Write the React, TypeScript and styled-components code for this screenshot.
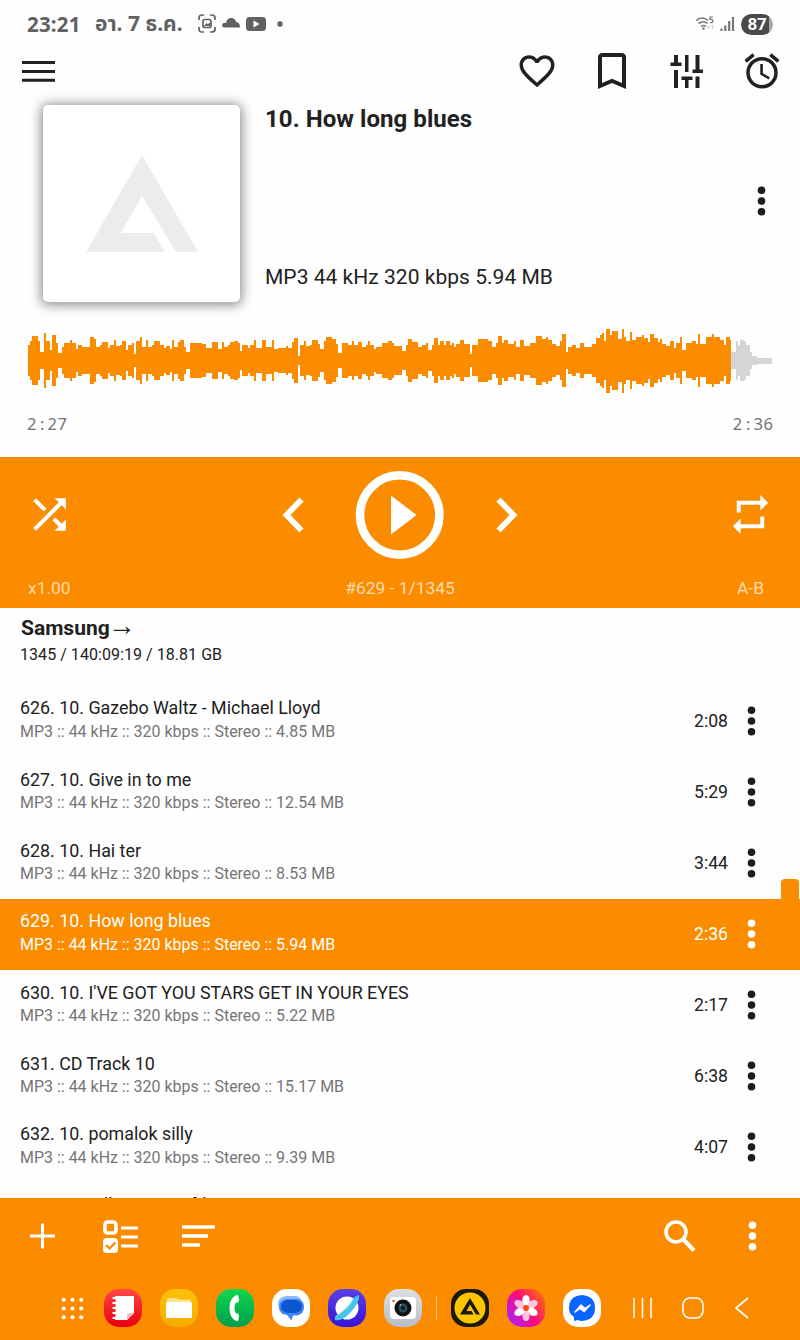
import React from "react";
import styled, { createGlobalStyle } from "styled-components";
import {
  MdAccessAlarm,
  MdBookmarkBorder,
  MdFavoriteBorder,
  MdRepeat,
  MdShuffle
} from "react-icons/md";

const ORANGE = "#fb8c00";
const INK = "#212121";

const GlobalStyle = createGlobalStyle`
  * {
    box-sizing: border-box;
  }

  body {
    margin: 0;
    background: #fefefe;
    color: ${INK};
    font-family: Roboto, "Noto Sans", sans-serif;
  }

  svg {
    display: block;
    flex: none;
  }
`;

const Screen = styled.div`
  display: flex;
  flex-direction: column;
  width: 800px;
  height: 1340px;
  overflow: hidden;
`;

const StatusBar = styled.div`
  display: flex;
  align-items: center;
  height: 48px;
  padding: 0 27px;
  color: #616161;
  font-family: "Noto Sans", "Noto Sans Thai", sans-serif;
  font-size: 20px;
  font-weight: 700;
`;

const Clock = styled.span`
  width: 68px;
  font-size: 20.5px;
  letter-spacing: 0.2px;
  white-space: nowrap;
`;

const DateText = styled.span`
  width: 103px;
  padding-top: 1px;
  font-size: 21px;
  white-space: nowrap;
`;

const Spacer = styled.div`
  flex: 1;
`;

const Battery = styled.div`
  display: flex;
  align-items: center;
  justify-content: center;
  width: 32px;
  height: 21px;
  margin-left: 6px;
  border-radius: 11px;
  background: linear-gradient(90deg, #4a4a4a 87%, #a8a8a8 87%);
  color: #fff;
  font-family: Roboto, sans-serif;
  font-size: 17px;
  letter-spacing: -0.3px;
`;

const Toolbar = styled.div`
  display: flex;
  align-items: center;
  height: 48px;
  padding: 0 1px 2px 22px;
`;

const ToolIcon = styled.div`
  display: flex;
  justify-content: center;
  width: 74.8px;
`;

const Header = styled.div`
  display: flex;
  height: 226px;
  padding: 9px 34px 0 43px;
`;

const Cover = styled.div`
  width: 197px;
  height: 197px;
  border-radius: 5px;
  background: #fff;
  box-shadow: 0 1px 12px 2px rgba(0, 0, 0, 0.45);
`;

const TrackInfo = styled.div`
  display: flex;
  flex: 1;
  flex-direction: column;
  justify-content: space-between;
  height: 185px;
  padding-left: 25px;
`;

const TrackTitle = styled.div`
  font-size: 24px;
  font-weight: 700;
  line-height: 28px;
  letter-spacing: 0.06px;
`;

const TrackFormat = styled.div`
  font-size: 21px;
  line-height: 26px;
  letter-spacing: 0.03px;
`;

const HeaderMenu = styled.div`
  padding-top: 81px;
`;

const WavePanel = styled.div`
  height: 135px;
  padding: 7px 28px 0;
`;

const TimeRow = styled.div`
  display: flex;
  justify-content: space-between;
  margin: 19px -1.5px 0 -1px;
  color: #757575;
  font-family: "Noto Sans", sans-serif;
  font-size: 16.5px;
  line-height: 24px;
  letter-spacing: 0.6px;
`;

const Colon = styled.span`
  padding: 0 2.5px 0 3px;
`;

const Controls = styled.div`
  height: 151px;
  padding: 14px 25px 0;
  background: ${ORANGE};
  color: #fff;
`;

const ControlButtons = styled.div`
  display: grid;
  grid-template-columns: 49px 1fr 49px;
  grid-template-rows: 87px;
  align-items: center;
  justify-items: center;
  height: 87px;
`;

const Transport = styled.div`
  display: flex;
  align-items: center;
  justify-content: center;
  gap: 51px;
`;

const ControlLabels = styled.div`
  display: grid;
  grid-template-columns: 100px 1fr 100px;
  padding: 19px 11px 0 3px;
  color: #ffdcae;
  font-size: 17.4px;
  line-height: 22px;

  span:nth-child(2) {
    padding-left: 8px;
    text-align: center;
  }

  span:last-child {
    text-align: right;
  }
`;

const ListHeader = styled.div`
  height: 78px;
  padding: 8px 20px 0;
`;

const ListName = styled.div`
  height: 24px;
  padding-left: 1px;
  font-size: 21px;
  font-weight: 700;
  line-height: 24px;
`;

const Arrow = styled.span`
  margin-left: -2px;
  font-family: "Liberation Sans", sans-serif;
  font-size: 28px;
  font-weight: 400;
  line-height: 0;
`;

const ListSummary = styled.div`
  padding-top: 4px;
  font-size: 16px;
  line-height: 21px;
  letter-spacing: 0.05px;
`;

const Playlist = styled.div`
  height: 512px;
  overflow: hidden;
`;

const RowText = styled.div`
  flex: 1;
  white-space: nowrap;
`;

const RowTitle = styled.div`
  height: 23px;
  font-size: 17.85px;
  line-height: 24px;
`;

const RowMeta = styled.div<{ $active?: boolean }>`
  color: ${p => (p.$active ? "#fff" : "#757575")};
  font-size: 15.97px;
  line-height: 23px;
`;

const Row = styled.div<{ $active?: boolean }>`
  position: relative;
  display: flex;
  align-items: flex-start;
  height: 71px;
  padding: 11px 44px 0 20px;
  background: ${p => (p.$active ? ORANGE : "transparent")};
  color: ${p => (p.$active ? "#fff" : INK)};

  &:nth-child(3n + 1) ${RowTitle},
  &:last-child ${RowTitle} {
    line-height: 22px;
  }
`;

const Duration = styled.div`
  margin-right: 19px;
  font-size: 17.6px;
  line-height: 49px;
`;

const RowMenu = styled.div`
  padding-top: 9px;
`;

const ScrollThumb = styled.div`
  position: absolute;
  top: -20px;
  right: 1px;
  width: 18px;
  height: 40px;
  border-radius: 4px;
  background: ${ORANGE};
`;

const BottomBar = styled.div`
  display: flex;
  align-items: center;
  height: 78px;
  padding: 0 43px 2px 30px;
  background: ${ORANGE};
`;

const BarActions = styled.div<{ $gap: number }>`
  display: flex;
  align-items: center;
  gap: ${p => p.$gap}px;
`;

const ListActions = styled(BarActions)`
  margin-left: 47px;
`;

const Dock = styled.div`
  display: flex;
  align-items: center;
  height: 64px;
  padding: 0 0 0 61px;
  background: ${ORANGE};
`;

const AppIcons = styled.div`
  display: flex;
  gap: 18px;
`;

const FirstApps = styled(AppIcons)`
  margin-left: 20px;
`;

const AppIcon = styled.div<{ $bg: string }>`
  width: 38px;
  height: 38px;
  border-radius: 15px;
  background: ${p => p.$bg};
  overflow: hidden;
`;

const Divider = styled.div`
  width: 1px;
  height: 24px;
  margin: 0 14px;
  background: #ffc680;
`;

const NavKeys = styled.div`
  display: flex;
  align-items: center;
  gap: 29.5px;
  margin-left: 31px;
`;

const WAVE_LEFT = 28;
const WAVE_MID = 31;
const PLAYED_TO = 731;

// [x, amplitude] pairs, every level holds until the next x
const WAVE: number[][] = [
  [28,15],[30,19],[32,24],[38,19],[40,8],[44,27],[46,19],[50,10],[52,25],[56,17],[58,7],
  [62,13],[64,17],[68,17],[70,20],[72,17],[76,11],[78,15],[82,13],[90,23],[94,21],[96,13],
  [100,15],[102,18],[108,12],[110,15],[114,20],[116,14],[120,15],[122,19],[126,10],[128,15],
  [132,17],[134,6],[136,19],[140,23],[142,13],[146,20],[148,13],[152,15],[154,19],[160,15],
  [164,12],[166,14],[170,11],[172,20],[174,13],[178,18],[180,20],[184,13],[186,8],[190,17],
  [202,16],[206,12],[212,18],[218,11],[222,18],[224,13],[228,15],[230,18],[234,19],[238,17],
  [240,9],[242,15],[248,12],[250,15],[254,20],[256,12],[262,20],[266,13],[272,20],[274,11],
  [278,12],[286,14],[288,12],[292,18],[294,22],[298,4],[300,15],[304,19],[306,14],[310,15],
  [312,20],[318,16],[320,11],[324,19],[326,23],[332,21],[336,16],[338,7],[342,17],[348,15],
  [352,19],[354,15],[358,18],[362,13],[366,15],[368,19],[370,15],[374,11],[376,13],[382,17],
  [388,19],[392,17],[394,14],[402,9],[406,15],[408,21],[412,18],[418,13],[422,15],[426,17],
  [428,10],[432,15],[434,22],[438,15],[440,19],[444,15],[446,19],[450,15],[452,17],[454,13],
  [456,16],[460,20],[464,16],[470,6],[472,15],[478,21],[488,19],[492,13],[496,17],[498,24],
  [502,17],[504,20],[508,16],[514,19],[516,13],[520,20],[524,14],[530,17],[536,24],[542,21],
  [546,23],[548,20],[552,16],[556,14],[560,19],[562,26],[566,8],[568,13],[572,15],[576,12],
  [580,17],[584,13],[592,16],[596,22],[600,25],[602,27],[604,19],[606,32],[610,25],[612,29],
  [618,21],[622,32],[624,23],[626,19],[630,28],[632,20],[636,23],[642,25],[644,22],[648,18],
  [650,26],[654,22],[658,18],[660,21],[662,16],[666,14],[670,19],[674,12],[676,17],[680,23],
  [682,10],[686,17],[692,19],[696,16],[698,26],[700,16],[706,23],[712,26],[714,23],[720,20],
  [724,15],[726,23],[730,20],[731,8],[736,19],[738,15],[740,20],[744,19],[746,15],[750,8],
  [752,4],[757,2.5],[772,0]
];

const APPS = [
  {
    bg: "linear-gradient(#ff4747, #e8000c)",
    art: (
      <>
        <path d="M11 7h19v17l-7 7H11z" fill="#fff" />
        <path d="M23 31l7-7h-5q-2 0-2 2z" fill="#ffb7b7" />
        {[9, 14, 19, 24, 29].map(y => (
          <path key={y} d={`M8.500 ${y}h4`} stroke="#fff" strokeWidth="2" />
        ))}
        {[11.5, 16.5, 21.5, 26.5].map(y => (
          <circle key={y} cx="11" cy={y} r="1" fill="#f43030" />
        ))}
      </>
    )
  },
  {
    bg: "linear-gradient(#ffc108, #f5aa00)",
    art: (
      <>
        <path d="M7 11q0-2 2-2h7l3 1.500h10q2 0 2 2v3H7z" fill="#ffe58c" />
        <rect x="6" y="13" width="26" height="16" rx="1.500" fill="#fff" />
      </>
    )
  },
  {
    bg: "linear-gradient(#0fd64f, #009e4c)",
    art: (
      <path
        d="M19.500 6.500q2-1 3 .5l.5 5q-.5 2-3.500 2-2 5 0 10 3 0 3.500 2l-.5 5q-1 1.500-3 .5-6-3-6-12.500t6-12.500z"
        fill="#fff"
      />
    )
  },
  {
    bg: "#fff",
    art: (
      <>
        <path d="M14 7h10q6 1 6 8H8q-3 4 0 6-2-2-2-6 0-7 8-8z" fill="#8fb6fb" />
        <path d="M15 10h10q7 1 7 8 0 7-7 8.500h-4l-1.500 5L15 26q-8-1-8-8t8-8z" fill="#4285f4" />
        <path d="M15 11h8q7 1 7 6.500T23 24h-7q-7-1-7-6.500T15 11z" fill="#0b57d0" />
      </>
    )
  },
  {
    bg: "linear-gradient(#5940e8, #3514d8)",
    art: (
      <>
        <circle cx="19" cy="19" r="11.500" fill="#fff" />
        <path d="M31 6q1 7-8 17T7 31q-1-1 1-5 2 1 10-7T25 9q5-3 6-3z" fill="#48c4ec" />
        <path d="M12 24q7-4 13-14-3 10-13 14z" fill="#8fdcf5" />
      </>
    )
  },
  {
    bg: "linear-gradient(#dce0e5, #b7bec9)",
    art: (
      <>
        <rect x="6" y="8" width="26" height="22" rx="4" fill="#fff" />
        <circle cx="9.500" cy="12" r="1.200" fill="#f04545" />
        <circle cx="19" cy="19" r="8.500" fill="#111" />
        <circle cx="19" cy="19" r="4.500" fill="#2d4f59" />
        <circle cx="19" cy="19" r="2" fill="#0b1b22" />
        <circle cx="16.500" cy="16" r="1" fill="#7ea0aa" />
      </>
    )
  },
  {
    bg: "#191812",
    art: (
      <>
        <circle cx="19" cy="19" r="15.500" fill="#fdc500" />
        <path
          d="M19 9L9 25.500h13.500l-2-3.500h-5l3.500-6.500 6 10h4z"
          fill="#191812"
        />
      </>
    )
  },
  {
    bg: "linear-gradient(55deg, #b51ee8 15%, #ff0a7d 50%, #ff5a25 85%)",
    art: (
      <>
        {[0, 60, 120, 180, 240, 300].map(a => (
          <ellipse
            key={a}
            cx="19"
            cy="11.500"
            rx="3.700"
            ry="5.500"
            fill={[60, 180, 300].includes(a) ? "#ffc4e0" : "#fff"}
            transform={`rotate(${a} 19 19)`}
          />
        ))}
        <circle cx="19" cy="19" r="3" fill="#ff4b13" />
      </>
    )
  },
  {
    bg: "#fff",
    art: (
      <>
        <path
          d="M19 6q13 1 13 13t-13 13q-3 0-4-1l-4 1v-4q-5-3-5-9Q6 7 19 6z"
          fill="#0866ff"
        />
        <path
          d="M12 23l6-7 4 3.500 5-3.500-6 6.500-4-3.200z"
          fill="#fff"
          stroke="#fff"
          strokeWidth="1.500"
          strokeLinejoin="round"
        />
      </>
    )
  }
];

const TRACKS = [
  { title: "626. 10. Gazebo Waltz - Michael Lloyd", size: "4.85", time: "2:08" },
  { title: "627. 10. Give in to me", size: "12.54", time: "5:29" },
  { title: "628. 10. Hai ter", size: "8.53", time: "3:44" },
  { title: "629. 10. How long blues", size: "5.94", time: "2:36", active: true },
  { title: "630. 10. I'VE GOT YOU STARS GET IN YOUR EYES", size: "5.22", time: "2:17" },
  { title: "631. CD Track 10", size: "15.17", time: "6:38" },
  { title: "632. 10. pomalok silly", size: "9.39", time: "4:07" }
];

const Dots = ({ color = "#1c1c1c" }: { color?: string }) => (
  <svg width="9" height="30" fill={color}>
    <circle cx="4.500" cy="4.300" r="3.800" />
    <circle cx="4.500" cy="15" r="3.800" />
    <circle cx="4.500" cy="25.700" r="3.800" />
  </svg>
);

const Chevron = ({ flip }: { flip?: boolean }) => (
  <svg width="22" height="36" fill="none" stroke="#fff" strokeWidth="5.800">
    <path
      d="M19.500 2.500L4.500 18l15 15.500"
      transform={flip ? "matrix(-1 0 0 1 22 0)" : undefined}
    />
  </svg>
);

const Time = ({ value }: { value: string }) => {
  const [minutes, seconds] = value.split(":");
  return (
    <span>
      {minutes}
      <Colon>:</Colon>
      {seconds}
    </span>
  );
};

const Waveform = () => (
  <svg width="744" height="64" shapeRendering="crispEdges">
    {WAVE.slice(0, -1).map(([x, amp], i) => (
      <rect
        key={x}
        x={x - WAVE_LEFT}
        y={WAVE_MID - amp}
        width={WAVE[i + 1][0] - x}
        height={amp * 2 + 1}
        fill={x < PLAYED_TO ? ORANGE : "#d5d5d5"}
      />
    ))}
  </svg>
);

const StatusIcons = () => (
  <svg width="86" height="20" fill="#616161">
    <g fill="none" stroke="#616161" strokeWidth="1.700">
      <path d="M1 6V4q0-3 3-3h2M12 1h2q3 0 3 3v2M17 13v2q0 3-3 3h-2M6 18H4q-3 0-3-3v-2" />
      <rect x="5" y="5.500" width="8" height="8" rx="2" />
    </g>
    <path d="M6 12l2.500-3 1.200 1.200L12 8.500V12z" />
    <path d="M27 13.500q-3 0-3-2.500 1-3 4-2 1-5.500 6-5 4 1 4 4 4 0 4 5.500z" />
    <rect x="48" y="3" width="20" height="14" rx="3.500" />
    <path d="M55.500 6.500v7l6-3.500z" fill="#fff" />
    <circle cx="82" cy="10" r="2.700" />
  </svg>
);

const SignalIcons = () => (
  <svg width="40" height="18" fill="none" stroke="#777">
    <path d="M1 5.500q6-5 12 0M3.500 8.500q5-3.500 9 0M6 11.500q2.500-2 5 0" strokeWidth="1.600" />
    <circle cx="8.500" cy="13.500" r="1.200" fill="#777" stroke="none" />
    <path d="M18 2h-3v2.500q3-.5 3 1.500t-3 1.500" strokeWidth="1.200" />
    <path d="M13.500 10v4M17.500 10v4M12 12.500l1.500 1.500 1.500-1.500M16 11.500l1.500-1.500 1.500 1.500" stroke="#d0d0d0" />
    <path d="M26.500 13.500V16M30.300 10.500V16M34.200 6v10M38 2v14" strokeWidth="2.200" />
  </svg>
);

const TuneIcon = () => (
  <svg width="34" height="34" fill={INK}>
    <path d="M4 1h4v7.500h3.500v3.500h-11V8.500H4zM4 16h4v18H4z" />
    <path d="M15 1h3.500v17H15zM11.500 22.500h11v3.500h-4v8H15v-8h-3.500z" />
    <path d="M25.500 1h4v14.500h3.500V19H22.500v-3.500h3zM25.500 22.500h4V34h-4z" />
  </svg>
);

const App = () => {
  return (
    <Screen>
      <GlobalStyle />
      <StatusBar>
        <Clock>23:21</Clock>
        <DateText>อา. 7 ธ.ค.</DateText>
        <StatusIcons />
        <Spacer />
        <SignalIcons />
        <Battery>87</Battery>
      </StatusBar>

      <Toolbar>
        <svg width="33" height="22" stroke={INK} strokeWidth="3">
          <path d="M0 2.500h33M0 11.500h33M0 20.300h33" />
        </svg>
        <Spacer />
        <ToolIcon>
          <MdFavoriteBorder size={42} />
        </ToolIcon>
        <ToolIcon>
          <MdBookmarkBorder size={48} />
        </ToolIcon>
        <ToolIcon>
          <TuneIcon />
        </ToolIcon>
        <ToolIcon>
          <MdAccessAlarm size={42} />
        </ToolIcon>
      </Toolbar>

      <Header>
        <Cover>
          <svg width="197" height="197" fill="#ececec">
            <path d="M99 50L43 147h79l-11-19H78l21-37 34 56h22z" />
          </svg>
        </Cover>
        <TrackInfo>
          <TrackTitle>10. How long blues</TrackTitle>
          <TrackFormat>MP3 44 kHz 320 kbps 5.94 MB</TrackFormat>
        </TrackInfo>
        <HeaderMenu>
          <Dots />
        </HeaderMenu>
      </Header>

      <WavePanel>
        <Waveform />
        <TimeRow>
          <Time value="2:27" />
          <Time value="2:36" />
        </TimeRow>
      </WavePanel>

      <Controls>
        <ControlButtons>
          <MdShuffle size={49} />
          <Transport>
            <Chevron />
            <svg width="90" height="90">
              <circle cx="44.700" cy="45" r="39.700" fill="none" stroke="#fff" strokeWidth="8.600" />
              <path d="M36 25.500v39L61.500 45z" fill="#fff" />
            </svg>
            <Chevron flip />
          </Transport>
          <MdRepeat size={47} />
        </ControlButtons>
        <ControlLabels>
          <span>x1.00</span>
          <span>#629 - 1/1345</span>
          <span>A-B</span>
        </ControlLabels>
      </Controls>

      <ListHeader>
        <ListName>
          Samsung<Arrow>→</Arrow>
        </ListName>
        <ListSummary>1345 / 140:09:19 / 18.81 GB</ListSummary>
      </ListHeader>

      <Playlist>
        {TRACKS.map(track => (
          <Row key={track.title} $active={track.active}>
            <RowText>
              <RowTitle>{track.title}</RowTitle>
              <RowMeta $active={track.active}>
                MP3 :: 44 kHz :: 320 kbps :: Stereo :: {track.size} MB
              </RowMeta>
            </RowText>
            <Duration>{track.time}</Duration>
            <RowMenu>
              <Dots color={track.active ? "#fff" : undefined} />
            </RowMenu>
            {track.active && <ScrollThumb />}
          </Row>
        ))}
        <Row>
          <RowTitle>633. 10. Killing me softly</RowTitle>
        </Row>
      </Playlist>

      <BottomBar>
        <svg width="26" height="26" stroke="#fff" strokeWidth="3">
          <path d="M0 13h25M12.500 .5v25" />
        </svg>
        <ListActions $gap={43}>
          <svg width="36" height="33" fill="none" stroke="#fff">
            <rect x="2" y="2" width="11" height="11" rx="2.500" strokeWidth="3.600" />
            <rect x="0" y="18" width="15" height="15" rx="3.500" fill="#fff" stroke="none" />
            <path d="M3 25l3.500 3.500 6-6" stroke={ORANGE} strokeWidth="2.200" />
            <path d="M18 8h17M18 17h17M18 26h17" strokeWidth="3.200" />
          </svg>
          <svg width="33" height="22" stroke="#fff" strokeWidth="3.300">
            <path d="M0 2h33M0 11h26M0 20h18" />
          </svg>
        </ListActions>
        <Spacer />
        <BarActions $gap={52}>
          <svg width="32" height="32" fill="none" stroke="#fff" strokeWidth="3.600">
            <circle cx="12" cy="12" r="10" />
            <path d="M19 19l11 11.500" strokeWidth="4.200" />
          </svg>
          <Dots color="#fff" />
        </BarActions>
      </BottomBar>

      <Dock>
        <svg width="23" height="23" fill="#fff">
          {[2.7, 11.5, 20.3].map(y =>
            [2.7, 11.5, 20.3].map(x => <circle key={`${x}-${y}`} cx={x} cy={y} r="2" />)
          )}
        </svg>
        <FirstApps>
          {APPS.slice(0, 6).map((app, i) => (
            <AppIcon key={i} $bg={app.bg}>
              <svg width="38" height="38">{app.art}</svg>
            </AppIcon>
          ))}
        </FirstApps>
        <Divider />
        <AppIcons>
          {APPS.slice(6).map((app, i) => (
            <AppIcon key={i} $bg={app.bg}>
              <svg width="38" height="38">{app.art}</svg>
            </AppIcon>
          ))}
        </AppIcons>
        <NavKeys>
          <svg width="20" height="22" stroke="#fff" strokeWidth="1.500">
            <path d="M2 1v20M10.500 1v20M19 1v20" />
          </svg>
          <svg width="22" height="22" fill="none" stroke="#fff" strokeWidth="1.600">
            <rect x="1" y="1" width="20" height="20" rx="7" />
          </svg>
          <svg width="16" height="22" fill="none" stroke="#fff" strokeWidth="1.700">
            <path d="M15 1L3 11l12 10" />
          </svg>
        </NavKeys>
      </Dock>
    </Screen>
  );
};

export default App;
